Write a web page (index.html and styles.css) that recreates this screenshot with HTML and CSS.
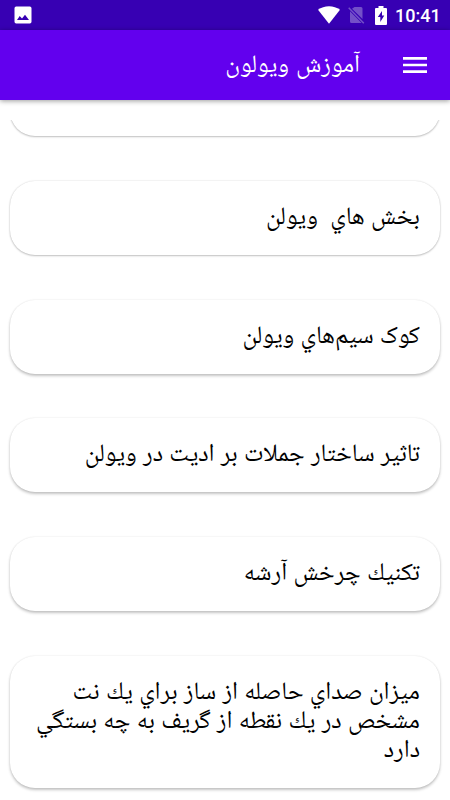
FILE: index.html
```html
<!DOCTYPE html>
<html lang="fa" dir="rtl">
<head>
  <meta charset="UTF-8">
  <meta name="viewport" content="width=device-width, initial-scale=1.0">
  <title>آموزش ویولون</title>
  <link rel="stylesheet" href="styles.css">
</head>
<body>
  <div class="status-bar" dir="ltr">
    <svg class="picture-icon" width="18" height="18" viewBox="0 0 18 18">
      <path fill="#fff" fill-rule="evenodd" d="M2.2.5h13.6q1.700 0 1.700 1.700v13.600q0 1.700-1.700 1.700H2.200q-1.700 0-1.700-1.700V2.200Q.5.5 2.200.5zM3 14h12l-4-5.300-3 3.900-2.300-2.500z"/>
    </svg>
    <div class="status-icons">
      <svg class="wifi-icon" width="22" height="18" viewBox="0 0 22 18">
        <path fill="#fff" d="M0 3.800C6-1.100 16-1.100 22 3.800L11 17.800z"/>
      </svg>
      <svg class="sim-icon" width="17" height="18" viewBox="0 0 17 18">
        <path fill="#7350c8" d="M6.500 1H13q1.500 0 1.500 1.500V13L4 2.800zM2 5.200L13.600 17H3.500Q2 17 2 15.500z"/>
        <path stroke="#7350c8" stroke-width="1.500" d="M.7 1.700L15.800 17.200"/>
      </svg>
      <svg class="battery-icon" width="12" height="19" viewBox="0 0 12 19">
        <path fill="#fff" fill-rule="evenodd" d="M3.500 0h5v2H11q1 0 1 1v15q0 1-1 1H1q-1 0-1-1V3q0-1 1-1h2.500zM7 5L2.800 11h2.500v5l4-6.500H7z"/>
      </svg>
      <span class="clock">10:41</span>
    </div>
  </div>

  <header class="app-bar">
    <svg class="menu-icon" width="24" height="16" viewBox="0 0 24 16">
      <path fill="#fff" d="M0 0h24v2.700H0zM0 6.650h24v2.700H0zM0 13.300h24V16H0z"/>
    </svg>
    <h1>آموزش ویولون</h1>
  </header>

  <main class="lesson-list">
    <div class="card card-cut"></div>
    <div class="card">بخش هاي&nbsp; ويولن</div>
    <div class="card">کوک سیم‌هاي ويولن</div>
    <div class="card">تاثير ساختار جملات بر اديت در ويولن</div>
    <div class="card">تكنيك چرخش آرشه</div>
    <div class="card">ميزان صداي حاصله از ساز براي يك نت<br>مشخص در يك نقطه از گريف به چه بستگي<br>دارد</div>
  </main>
</body>
</html>
```
FILE: styles.css
```css
* {
  box-sizing: border-box;
  margin: 0;
  padding: 0;
}

body {
  height: 100vh;
  display: flex;
  flex-direction: column;
  overflow: hidden;
  background-color: #fff;
  color: #000;
  font-family: "Noto Naskh Arabic UI", "Noto Naskh Arabic", "Noto Sans Arabic", "Noto Sans", "DejaVu Sans", sans-serif;
}

svg {
  display: block;
}

.status-bar {
  height: 30px;
  flex: none;
  display: flex;
  align-items: center;
  justify-content: space-between;
  padding: 0 10px 0 14px;
  background-color: #3700b3;
}

.status-icons {
  display: flex;
  align-items: center;
}

.sim-icon {
  margin-left: 8px;
}

.battery-icon {
  margin-left: 10px;
}

.clock {
  width: 45px;
  margin-left: 8px;
  padding-top: 2px;
  color: #fff;
  font-family: Roboto, sans-serif;
  font-size: 18px;
  font-weight: 500;
  line-height: 20px;
  white-space: nowrap;
}

.app-bar {
  height: 70px;
  flex: none;
  display: flex;
  align-items: center;
  gap: 43px;
  padding: 0 23px;
  background-color: #6200ee;
  color: #fff;
  box-shadow: 0 1px 5px rgba(0, 0, 0, 0.4);
}

h1 {
  font-size: 25px;
  font-weight: 400;
  line-height: 32px;
  word-spacing: 1.5px;
}

.lesson-list {
  flex: 1;
  min-height: 0;
  display: flex;
  flex-direction: column;
  gap: 44.8px;
  margin-top: 20px;
  padding: 0 10px;
  overflow: hidden;
}

.card {
  flex: none;
  padding: 22px 20px 23px;
  border-radius: 25px;
  background-color: #fff;
  box-shadow: 0 2px 3px rgba(0, 0, 0, 0.23), 0 0 2px rgba(0, 0, 0, 0.1);
  font-size: 25px;
  line-height: 29px;
  word-spacing: 0.7px;
  white-space: nowrap;
}

.card-cut {
  height: 74px;
  margin-top: -58.1px;
}

/* shadow gets lighter towards the top of the list */
.card:nth-child(-n+2) {
  box-shadow: 0 1px 2px rgba(0, 0, 0, 0.22), 0 0 2px rgba(0, 0, 0, 0.14);
}
```
